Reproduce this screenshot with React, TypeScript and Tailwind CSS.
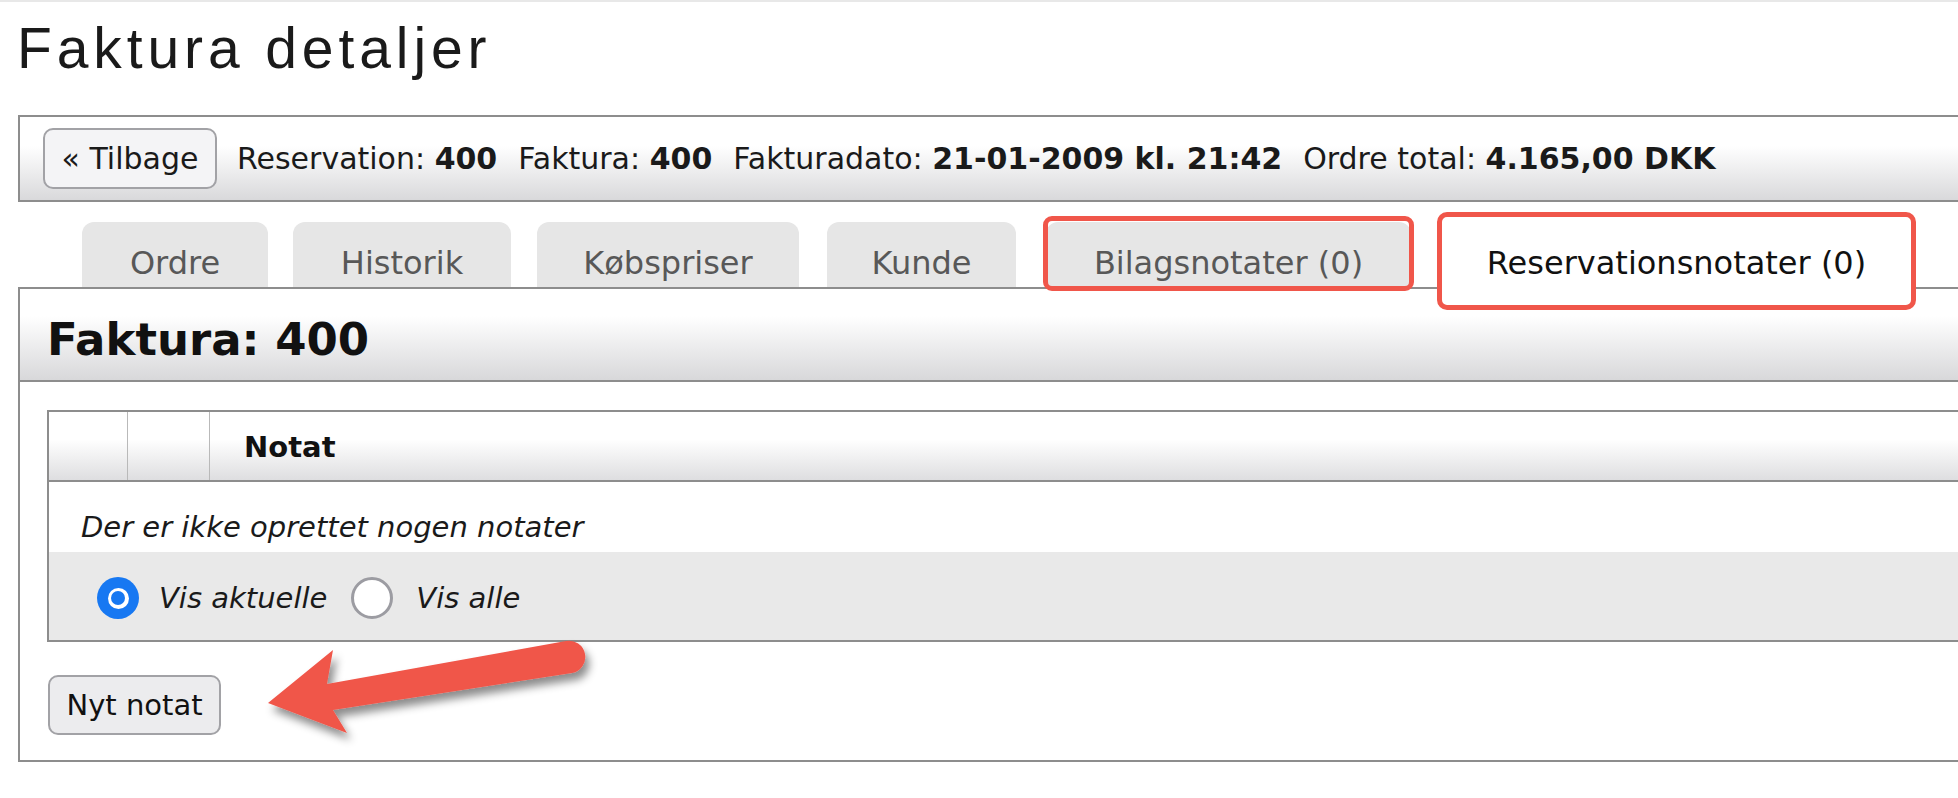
const RED = '#f0564a';

const tabs = [
  { label: 'Ordre', w: 'w-[186px]', ml: 'ml-[82px]' },
  { label: 'Historik', w: 'w-[218px]', ml: 'ml-[25px]' },
  { label: 'Købspriser', w: 'w-[262px]', ml: 'ml-[26px]' },
  { label: 'Kunde', w: 'w-[189px]', ml: 'ml-[28px]' },
];

export default function App() {
  return (
    <div className="relative w-[1958px] h-[798px] overflow-hidden bg-white font-['DejaVu_Sans',sans-serif] text-[#111]">
      <div className="h-[2px] bg-[#e8e8e8]" />

      <h1 className="mt-[18px] ml-[17px] font-['Liberation_Sans',Arial,sans-serif] text-[57px] leading-none tracking-[4.9px] text-[#1a1a1a]">
        Faktura detaljer
      </h1>

      {/* Værktøjslinje */}
      <div className="mt-[38px] ml-[18px] h-[87px] flex items-center border-2 border-r-0 border-[#8d8d8d] bg-linear-to-b from-white from-35% to-[#d9d9db]">
        <button className="ml-[23px] w-[174px] h-[61px] rounded-[10px] border-2 border-[#a2a2a6] bg-[#f4f4f6] text-[30px] leading-none text-[#1a1a1a]">
          « Tilbage
        </button>
        <div className="ml-[20px] flex items-center gap-[21px] text-[30px] leading-none text-[#1a1a1a] whitespace-nowrap">
          <span>Reservation: <b>400</b></span>
          <span>Faktura: <b>400</b></span>
          <span>Fakturadato: <b>21-01-2009 kl. 21:42</b></span>
          <span>Ordre total: <b>4.165,00 DKK</b></span>
        </div>
      </div>

      {/* Faneblade */}
      <div className="mt-[10px] flex items-end h-[75px]">
        {tabs.map((t) => (
          <div
            key={t.label}
            className={`${t.ml} ${t.w} h-[65px] rounded-t-[12px] bg-[#e6e6e6] flex justify-center pt-[25px] text-[32px] leading-none text-[#585858]`}
          >
            {t.label}
          </div>
        ))}
        <div className="relative ml-[30px] w-[365px] h-[65px] rounded-t-[12px] bg-[#e6e6e6] flex justify-center pt-[25px] text-[32px] leading-none text-[#585858]">
          Bilagsnotater (0)
          <div className="absolute -left-[3px] -right-[3px] -top-[6px] -bottom-[4px] rounded-[9px] border-[5px] border-[#f0564a]" />
        </div>
        <div className="relative z-10 ml-[26px] w-[479px] h-[98px] -mb-[23px] rounded-[10px] border-[5px] border-[#f0564a] bg-white flex justify-center pt-[30px] text-[32px] leading-none text-[#111]">
          Reservationsnotater (0)
        </div>
      </div>

      {/* Panel */}
      <div className="ml-[18px] border-2 border-r-0 border-[#8d8d8d]">
        <div className="h-[93px] border-b-2 border-[#8d8d8d] bg-linear-to-b from-white from-30% to-[#d8d8da] pl-[27px] pt-[28px]">
          <h2 className="text-[45px] leading-none font-bold text-[#111]">Faktura: 400</h2>
        </div>

        <div className="pt-[28px] pl-[27px] pb-[25px]">
          <div className="border-2 border-r-0 border-[#8d8d8d]">
            <div className="h-[70px] flex border-b-2 border-[#8d8d8d] bg-linear-to-b from-white from-40% to-[#dedee0]">
              <div className="w-[79px] border-r border-[#b9b9b9]" />
              <div className="w-[82px] border-r border-[#b9b9b9]" />
              <div className="flex items-center pl-[34px] pt-[2px] text-[29px] leading-none font-bold">Notat</div>
            </div>
            <div className="h-[70px] pl-[32px] pt-[31px] text-[29px] leading-none italic text-[#1a1a1a]">
              Der er ikke oprettet nogen notater
            </div>
            <div className="h-[88px] bg-[#e9e9e9] flex items-center pl-[48px] pt-[4px] text-[29px] leading-none italic text-[#1a1a1a]">
              <span className="w-[42px] h-[42px] rounded-full bg-[#1778f2] flex items-center justify-center">
                <span className="w-[21px] h-[21px] rounded-full bg-white flex items-center justify-center">
                  <span className="w-[14px] h-[14px] rounded-full bg-[#1778f2]" />
                </span>
              </span>
              <span className="ml-[20px]">Vis aktuelle</span>
              <span className="ml-[24px] w-[42px] h-[42px] rounded-full border-[3px] border-[#9c9ca2] bg-white" />
              <span className="ml-[23px]">Vis alle</span>
            </div>
          </div>

          <button className="mt-[33px] ml-[1px] w-[173px] h-[60px] rounded-[10px] border-2 border-[#a2a2a6] bg-[#ececee] text-[29px] leading-none text-[#111]">
            Nyt notat
          </button>
        </div>
      </div>

      {/* Rød pil (annotation) */}
      <svg className="pointer-events-none absolute left-0 top-0" width="1958" height="798" viewBox="0 0 1958 798">
        <defs>
          <filter id="shadow" x="-20%" y="-50%" width="140%" height="200%">
            <feDropShadow dx="4" dy="7" stdDeviation="4" floodColor="#000" floodOpacity="0.45" />
          </filter>
        </defs>
        <path
          d="M268 703 L333 650 L327 684 L566 641 A16 16 0 0 1 572 673 L333 710 L347 733 Z"
          fill={RED}
          filter="url(#shadow)"
        />
      </svg>
    </div>
  );
}
